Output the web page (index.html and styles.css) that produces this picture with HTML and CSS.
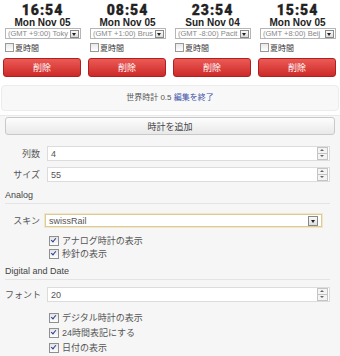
FILE: index.html
```html
<!DOCTYPE html>
<html lang="ja">
  <head>
    <meta charset="UTF-8" />
    <title>世界時計</title>
    <link rel="stylesheet" href="styles.css">
  </head>
  <body>
    <!-- Clocks -->
    <div class="clocks">
      <div class="clock">
        <div class="time">16:54</div>
        <div class="date">Mon Nov 05</div>
        <div class="tz"><span class="tz-text">(GMT +9:00) Toky</span><span class="drop"></span></div>
        <label class="dst"><span class="box"></span>夏時間</label>
        <button class="del">削除</button>
      </div>
      <div class="clock">
        <div class="time">08:54</div>
        <div class="date">Mon Nov 05</div>
        <div class="tz"><span class="tz-text">(GMT +1:00) Brus</span><span class="drop"></span></div>
        <label class="dst"><span class="box"></span>夏時間</label>
        <button class="del">削除</button>
      </div>
      <div class="clock">
        <div class="time">23:54</div>
        <div class="date">Sun Nov 04</div>
        <div class="tz"><span class="tz-text">(GMT -8:00) Pacit</span><span class="drop"></span></div>
        <label class="dst"><span class="box"></span>夏時間</label>
        <button class="del">削除</button>
      </div>
      <div class="clock">
        <div class="time">15:54</div>
        <div class="date">Mon Nov 05</div>
        <div class="tz"><span class="tz-text">(GMT +8:00) Beij</span><span class="drop"></span></div>
        <label class="dst"><span class="box"></span>夏時間</label>
        <button class="del">削除</button>
      </div>
    </div>

    <!-- Version -->
    <div class="version">世界時計 0.5 <a href="#">編集を終了</a></div>

    <!-- Settings -->
    <div class="settings">
      <button class="add">時計を追加</button>

      <div class="row">
        <span class="label">列数</span>
        <div class="field">4<span class="spin"><i class="up"></i><i class="down"></i></span></div>
      </div>
      <div class="row">
        <span class="label">サイズ</span>
        <div class="field">55<span class="spin"><i class="up"></i><i class="down"></i></span></div>
      </div>

      <div class="heading">Analog</div>
      <div class="row skin-row">
        <span class="label">スキン</span>
        <div class="field skin">swissRail<span class="drop"></span></div>
      </div>
      <div class="checks analog">
        <div class="check"><span class="box on"></span>アナログ時計の表示</div>
        <div class="check"><span class="box on"></span>秒針の表示</div>
      </div>

      <div class="heading digital">Digital and Date</div>
      <div class="row font-row">
        <span class="label">フォント</span>
        <div class="field">20<span class="spin"><i class="up"></i><i class="down"></i></span></div>
      </div>
      <div class="checks">
        <div class="check"><span class="box on"></span>デジタル時計の表示</div>
        <div class="check"><span class="box on"></span>24時間表記にする</div>
        <div class="check"><span class="box on"></span>日付の表示</div>
      </div>
    </div>
  </body>
</html>
```

FILE: styles.css
```css
body {
  margin: 0;
  padding: 0;
  background: #fff;
  font-family: "Liberation Sans", "Noto Sans CJK JP", sans-serif;
  color: #444;
  width: 340px;
  height: 356px;
  overflow: hidden;
}

.clocks {
  display: grid;
  grid-template-columns: repeat(4, 85px);
}

.clock {
  padding: 0 4px 0 4px;
  text-align: center;
}

.time {
  font-family: "Roboto", sans-serif;
  font-weight: 900;
  font-size: 14px;
  line-height: 14px;
  letter-spacing: 1px;
  color: #222;
  padding-top: 3px;
  -webkit-text-stroke: 0.3px #222;
}

.date {
  font-weight: bold;
  font-size: 10px;
  line-height: 10px;
  color: #222;
  margin-top: 1px;
}

.tz {
  display: flex;
  align-items: center;
  height: 9px;
  margin: 0 0 0 1px;
  border: 1px solid #b5b5b5;
  background: #fff;
  text-align: left;
  overflow: hidden;
}

.tz-text {
  flex: 1;
  font-size: 7.5px;
  color: #888;
  white-space: nowrap;
  padding-left: 2px;
}

.drop {
  width: 7px;
  height: 6px;
  margin-right: 1px;
  border: 1px solid #888;
  background: linear-gradient(#fafafa, #ddd);
  position: relative;
  flex: none;
}

.drop::after {
  content: "";
  position: absolute;
  left: 1px;
  top: 2px;
  border-left: 2.5px solid transparent;
  border-right: 2.5px solid transparent;
  border-top: 3px solid #222;
}

.dst {
  display: flex;
  align-items: center;
  gap: 1px;
  margin: 4px 0 0 1px;
  font-size: 8px;
  color: #333;
  height: 9px;
}

.box {
  display: inline-block;
  width: 7px;
  height: 7px;
  border: 1px solid #999;
  background: linear-gradient(#e8e8e8, #fff);
  flex: none;
  position: relative;
}

.box.on::after {
  content: "";
  position: absolute;
  left: 2px;
  top: 0;
  width: 2px;
  height: 4px;
  border-right: 1.5px solid #2a3f8f;
  border-bottom: 1.5px solid #2a3f8f;
  transform: rotate(40deg);
}

.del {
  display: block;
  width: 78px;
  height: 19px;
  margin: 6px 0 0 -1px;
  border: 1px solid #b02020;
  border-radius: 3px;
  background: linear-gradient(#ec5a55, #cc2a28);
  color: #fff;
  font-family: "Noto Sans CJK JP", sans-serif;
  font-size: 9px;
  padding: 0;
}

.version {
  margin: 8px 1px 0 1px;
  height: 24px;
  line-height: 24px;
  border: 1px solid #ececec;
  border-radius: 4px;
  background: #f8f8f8;
  text-align: center;
  font-size: 8px;
  color: #555;
}

.version a {
  color: #3a4fa8;
  text-decoration: none;
}

.settings {
  margin-top: 4px;
  padding: 1px 10px 0 5px;
  background: #f6f6f6;
  border-top: 1px solid #eaeaea;
  min-height: 240px;
}

.add {
  display: block;
  width: 330px;
  height: 18px;
  border: 1px solid #c9c9c9;
  border-radius: 3px;
  background: linear-gradient(#fdfdfd, #e9e9e9);
  font-family: "Noto Sans CJK JP", sans-serif;
  font-size: 9px;
  color: #444;
  padding: 0;
  margin: 0 0 11px 0;
}

.row {
  display: flex;
  align-items: center;
  gap: 7px;
  margin-bottom: 6px;
}

.label {
  width: 35px;
  flex: none;
  text-align: right;
  font-size: 9px;
  color: #555;
  white-space: nowrap;
}

.field {
  display: flex;
  align-items: center;
  justify-content: space-between;
  box-sizing: border-box;
  width: 283px;
  height: 15px;
  padding-left: 3px;
  border: 1px solid #dcdcdc;
  background: #fff;
  font-size: 9px;
  color: #555;
}

.spin {
  display: flex;
  flex-direction: column;
  width: 9px;
  height: 11px;
  margin-right: 1px;
  border: 1px solid #c4c4c4;
  background: #f4f4f4;
}

.spin i {
  flex: 1;
  position: relative;
}

.spin .up {
  border-bottom: 1px solid #c4c4c4;
}

.spin i::after {
  content: "";
  position: absolute;
  left: 2px;
  top: 1px;
  border-left: 2px solid transparent;
  border-right: 2px solid transparent;
}

.spin .up::after {
  border-bottom: 2px solid #666;
}

.spin .down::after {
  border-top: 2px solid #666;
}

.skin-row {
  margin-bottom: 7px;
}

.skin {
  width: 277px;
  height: 13px;
  margin-left: -2px;
  border-color: #dccb98;
  box-shadow: 0 0 0 1px #f0e6c8;
}

.skin .drop {
  margin-right: 3px;
  width: 8px;
  height: 8px;
}

.skin .drop::after {
  left: 1.5px;
  top: 3px;
}

.heading {
  font-size: 9px;
  line-height: 11px;
  color: #444;
  padding: 2px 0 2px 0;
  border-bottom: 1px solid #e4e4e4;
  margin-bottom: 10px;
}

.heading.digital {
  padding-top: 6px;
  margin-bottom: 7px;
}

.font-row {
  margin-bottom: 8px;
}

.check {
  display: flex;
  align-items: center;
  gap: 3px;
  margin-left: 44px;
  height: 15px;
  font-size: 9px;
  color: #555;
}

.analog .check {
  height: 13px;
}

.check .box {
  width: 8px;
  height: 8px;
  border-color: #8f8f8f;
  background: linear-gradient(#e4e4e4, #fdfdfd);
}
```
